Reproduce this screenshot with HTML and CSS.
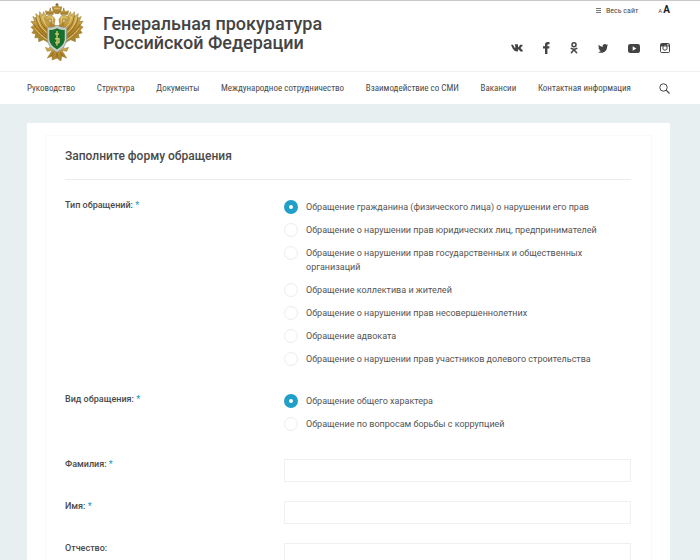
FILE: index.html
```html
<!DOCTYPE html>
<html lang="ru">
<head>
<meta charset="utf-8">
<meta name="viewport" content="width=device-width, initial-scale=1">
<title>Генеральная прокуратура Российской Федерации</title>
<link rel="stylesheet" href="styles.css">
</head>
<body>
<header class="header">
  <a class="brand" href="#">
    <svg class="emblem" viewBox="0 0 54 60" aria-hidden="true">
      <defs>
        <linearGradient id="gold" x1="0" y1="0" x2="0" y2="1">
          <stop offset="0" stop-color="#dcc468"/>
          <stop offset=".55" stop-color="#b4862a"/>
          <stop offset="1" stop-color="#a08434"/>
        </linearGradient>
      </defs>
      <g fill="url(#gold)" stroke="#9a7a30" stroke-width=".6">
        <path d="M21 22 13 9 12 13 9 9 9 14 5 11 6 16 2 14 4 19 0 19 3 23 0 25 3 28 1 31 5 32 4 36 8 36 8 40 13 38 20 42Z"/>
        <path d="M33 22 41 9 42 13 45 9 45 14 49 11 48 16 52 14 50 19 54 19 51 23 54 25 51 28 53 31 49 32 50 36 46 36 46 40 41 38 34 42Z"/>
        <path d="M22 44 18 47 15 46 17 50 22 49 17 57 22 55 22 59 27 57 31 60 32 55 37 57 32 49 37 50 39 46 35 47 32 44Z"/>
        <path d="M23 28 20 22 21 17 16 18 14 16 18 13 22 13 25 17 24 22 27 25 30 22 29 17 32 13 36 13 40 16 38 18 33 17 34 22 31 28Z"/>
        <path d="M16 12 15 8 18 9 20 7 22 9 24 8 23 12ZM31 12 30 8 32 9 34 7 36 9 39 8 38 12Z"/>
        <path d="M23 8 22 4 25 4 27 1 29 4 32 4 31 8 29 11 25 11Z"/>
      </g>
      <path d="M27 0V4M25.500 1.500H28.500M20 5V8M34 5V8" stroke="#76642e"/>
      <g fill="none" stroke="#7e5b19" stroke-width=".7">
        <path d="M5 15Q7 26 17 34M9 13Q10 23 18 29M3 22Q8 31 18 37M49 15Q47 26 37 34M45 13Q44 23 36 29M51 22Q46 31 36 37M24 50 21 55M27 49V56M30 50 33 55"/>
      </g>
      <g fill="none" stroke="#f0dc93" stroke-width=".8">
        <path d="M7 15Q8 24 17 31M12 14Q13 22 19 26M4 26Q9 33 18 39M47 15Q46 24 37 31M42 14Q41 22 35 26M50 26Q45 33 36 39M22 14 23 22M32 14 31 22M24 6H30"/>
      </g>
      <path d="M27 23Q32 26 37 25V38Q36 46 27 51Q18 46 17 38V25Q22 26 27 23Z" fill="#c6cec3" stroke="#879284" stroke-width=".7"/>
      <path d="M27 26Q31 28 35 28V38Q34 44 27 48Q20 44 19 38V28Q23 28 27 26Z" fill="#17702d"/>
      <path d="M27 29V44M25 32H29M25 37H29V41H25" fill="none" stroke="#d2c66a" stroke-width="1.500"/>
    </svg>
    <span class="brand-name">Генеральная прокуратура<br>Российской Федерации</span>
  </a>
  <div class="tools">
    <div class="options">
      <a class="sitemap" href="#">
        <svg width="5" height="6" viewBox="0 0 5 6" aria-hidden="true"><path d="M0 .5H5M0 2.500H5M0 4.500H5" stroke="#777"/></svg>
        Весь сайт
      </a>
      <button class="text-size" type="button" aria-label="Размер текста"><span class="small-a">A</span><span class="large-a">A</span></button>
    </div>
    <div class="social">
      <a href="#" aria-label="ВКонтакте"><svg width="12" height="8" viewBox="0 0 12 8"><path d="M0 .7H2L3.800 4 4.300 3.700V1.800L3.700.7 4.400.2H6.600L7 .6V3.200L7.400 3.300 9.300.7H11.600L11.800 1.200 9.500 3.900 12 6.700 11.600 7.400H9.500L7.400 5.300 7 5.500V7.200L6.500 7.500Q3.300 7.700 1.800 4.800Z" fill="#444"/></svg></a>
      <a href="#" aria-label="Facebook"><svg width="7" height="12" viewBox="0 0 7 12"><path d="M2 12V6.500H0V4.300H2V2.800Q2 0 4.800 0H6.500V2.200H5.300Q4.400 2.200 4.400 3V4.300H6.500L6.200 6.500H4.400V12Z" fill="#444"/></svg></a>
      <a href="#" aria-label="Одноклассники"><svg width="8" height="12" viewBox="0 0 8 12"><g fill="none" stroke="#444" stroke-width="1.500" stroke-linecap="round"><circle cx="4" cy="2.800" r="2"/><path d="M1.200 6.400Q4 8.100 6.800 6.400M4 7.700 1.400 10.800M4 7.700 6.600 10.800"/></g></svg></a>
      <a href="#" aria-label="Twitter"><svg width="10" height="9" viewBox="0 0 10 9"><path d="M.6.700Q2.300 2.700 4.800 2.700C4.500 1 5.500 0 6.800 0Q7.800 0 8.400.7L9.700.2 9.200 1.400 10 1.200 9.200 2.200C9.200 6 6.800 8.800 3.300 8.800Q1.400 8.800 0 7.900 1.700 8 2.900 7 1.500 6.800 1.100 5.500H1.900Q.4 5 .4 3.400L1.200 3.600Q0 2.400.6.700Z" fill="#444"/></svg></a>
      <a href="#" aria-label="YouTube"><svg width="12" height="9" viewBox="0 0 12 9"><rect width="12" height="9" rx="2.200" fill="#444"/><path d="M4.700 2.300 8.300 4.500 4.700 6.700Z" fill="#fff"/></svg></a>
      <a href="#" aria-label="Instagram"><svg width="10" height="10" viewBox="0 0 10 10"><rect x=".5" y=".5" width="9" height="9" rx="1" fill="none" stroke="#444"/><path d="M1 1H9V3.500H7L5 2.300 3 3.500H1Z" fill="#444"/><path d="M7 1.300H8.500V2.600H7Z" fill="#fff"/><circle cx="5" cy="5" r="2.200" fill="#fff" stroke="#444"/></svg></a>
    </div>
  </div>
</header>
<nav class="nav">
  <div class="nav-links">
    <a href="#">Руководство</a>
    <a href="#">Структура</a>
    <a href="#">Документы</a>
    <a href="#">Международное сотрудничество</a>
    <a href="#">Взаимодействие со СМИ</a>
    <a href="#">Вакансии</a>
    <a href="#">Контактная информация</a>
  </div>
  <button class="search" type="button" aria-label="Поиск"><svg width="11" height="11" viewBox="0 0 11 11"><circle cx="4.500" cy="4.500" r="3.700" fill="none" stroke="#444"/><path d="M7.200 7.200 10.500 10.500" stroke="#444" stroke-width="1.200"/></svg></button>
</nav>
<main class="page">
  <div class="card">
    <form class="panel">
      <h1 class="title">Заполните форму обращения</h1>
      <div class="row" role="radiogroup" aria-labelledby="type-label">
        <span class="label" id="type-label">Тип обращений: <span class="required">*</span></span>
        <div class="choices">
          <label class="choice"><input type="radio" name="type" checked><span>Обращение гражданина (физического лица) о нарушении его прав</span></label>
          <label class="choice"><input type="radio" name="type"><span>Обращение о нарушении прав юридических лиц, предпринимателей</span></label>
          <label class="choice"><input type="radio" name="type"><span>Обращение о нарушении прав государственных и общественных организаций</span></label>
          <label class="choice"><input type="radio" name="type"><span>Обращение коллектива и жителей</span></label>
          <label class="choice"><input type="radio" name="type"><span>Обращение о нарушении прав несовершеннолетних</span></label>
          <label class="choice"><input type="radio" name="type"><span>Обращение адвоката</span></label>
          <label class="choice"><input type="radio" name="type"><span>Обращение о нарушении прав участников долевого строительства</span></label>
        </div>
      </div>
      <div class="row" role="radiogroup" aria-labelledby="kind-label">
        <span class="label" id="kind-label">Вид обращения: <span class="required">*</span></span>
        <div class="choices">
          <label class="choice"><input type="radio" name="kind" checked><span>Обращение общего характера</span></label>
          <label class="choice"><input type="radio" name="kind"><span>Обращение по вопросам борьбы с коррупцией</span></label>
        </div>
      </div>
      <div class="row field">
        <label class="label" for="surname">Фамилия: <span class="required">*</span></label>
        <input class="text" id="surname" type="text">
      </div>
      <div class="row field">
        <label class="label" for="name">Имя: <span class="required">*</span></label>
        <input class="text" id="name" type="text">
      </div>
      <div class="row field">
        <label class="label" for="patronymic">Отчество:</label>
        <input class="text" id="patronymic" type="text">
      </div>
    </form>
  </div>
</main>
</body>
</html>
```
FILE: styles.css
```css
* {
  box-sizing: border-box;
}

body {
  margin: 0;
  height: 100vh;
  overflow: hidden;
  background: #fff;
  color: #4a4a4a;
  font: 9px/14px Roboto, "Liberation Sans", sans-serif;
}

a {
  color: inherit;
  text-decoration: none;
}

button {
  padding: 0;
  border: 0;
  background: none;
  color: inherit;
  font: inherit;
}

svg {
  display: block;
}

.header {
  display: flex;
  justify-content: space-between;
  padding: 2px 30px 10px;
  border-top: 1px solid #c9c9c9;
  border-bottom: 1px solid #f0f0f0;
}

.brand {
  display: flex;
  gap: 19px;
}

.emblem {
  width: 54px;
  height: 58px;
}

.brand-name {
  padding-top: 11px;
  color: #444;
  font-size: 18px;
  font-weight: 500;
  line-height: 19px;
}

.tools {
  display: flex;
  flex-direction: column;
  align-items: flex-end;
  gap: 24px;
}

.options {
  display: flex;
  align-items: center;
  gap: 20px;
  font-family: "Roboto Condensed", "Liberation Sans Narrow", Roboto, sans-serif;
  font-size: 8px;
}

.sitemap {
  display: flex;
  align-items: center;
  gap: 5px;
}

.text-size {
  display: flex;
  align-items: baseline;
  gap: 1px;
  font-family: Roboto, sans-serif;
}

.small-a {
  font-size: 6px;
}

.large-a {
  color: #222;
  font-size: 10px;
  font-weight: 700;
}

.social {
  display: flex;
  align-items: center;
  gap: 20px;
}

.nav {
  display: flex;
  align-items: center;
  justify-content: space-between;
  gap: 28px;
  padding: 9px 30px 9px 27px;
  font-family: "Roboto Condensed", "Liberation Sans Narrow", Roboto, sans-serif;
}

.nav-links {
  display: flex;
  flex: 1;
  justify-content: space-between;
  white-space: nowrap;
}

.page {
  padding: 19px 30px 19px 27px;
  background: #e7eff1;
}

.card {
  padding: 12px 18px;
  background: #fff;
}

.panel {
  padding: 13px 20px 20px 19px;
  border: 1px solid #fafafa;
}

.title {
  margin: 0 0 18px;
  padding-bottom: 16px;
  border-bottom: 1px solid #ebebeb;
  font-size: 12px;
  font-weight: 500;
  line-height: 14px;
}

.row {
  display: grid;
  grid-template-columns: 219px 1fr;
  margin-bottom: 26px;
}

.field {
  margin-bottom: 17px;
}

.label {
  font-weight: 500;
}

.required {
  color: #1d9fc6;
}

.choices {
  display: grid;
  gap: 9px;
  padding-top: 2px;
}

.choice {
  display: flex;
  gap: 8px;
  color: #555;
}

.choice input {
  flex: none;
  width: 14px;
  height: 14px;
  margin: 0;
  appearance: none;
  border: 1px solid #ededed;
  border-radius: 50%;
  background: #fff;
}

.choice input:checked {
  border: 5px solid #1f9fca;
}

.choice span {
  max-width: 300px;
}

.text {
  width: 100%;
  height: 23px;
  margin-top: 2px;
  padding: 0 8px;
  border: 1px solid #f0f0f0;
  border-radius: 0;
  background: #fff;
  font: inherit;
}
```
